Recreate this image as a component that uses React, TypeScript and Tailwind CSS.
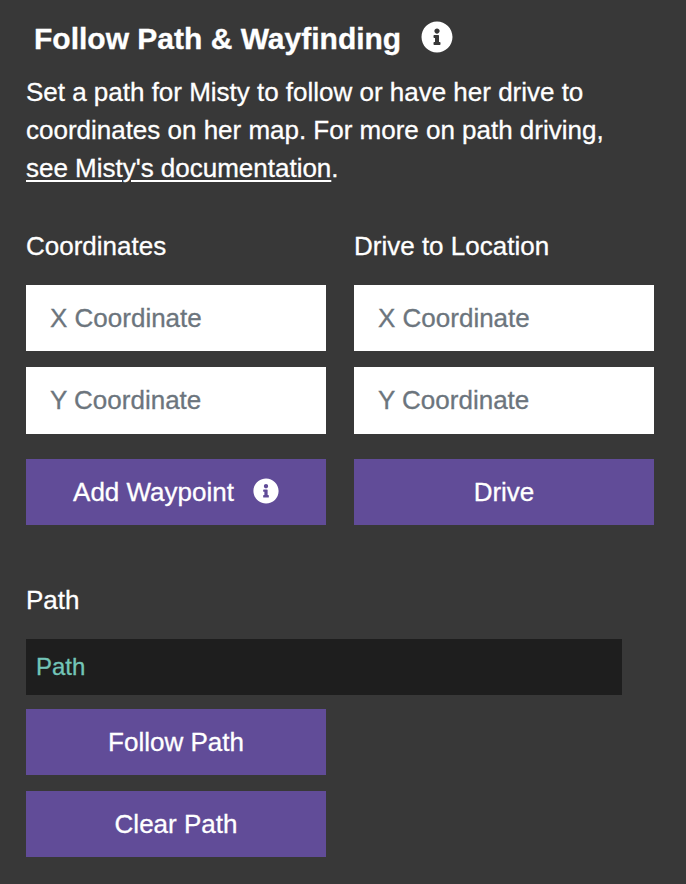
import React from 'react';
import { FaInfoCircle } from 'react-icons/fa';

const button = "flex h-[66px] w-[300px] items-center justify-center bg-[#614c98] text-[26px] text-white";
const input = "block w-[300px] bg-white px-6 text-[26px] text-black outline-none placeholder:text-[#6c757d] placeholder:opacity-100";

function Coordinates({ title, children }: { title: string; children: React.ReactNode }) {
  return (
    <section className="w-[300px]">
      <h2 className="mb-5 h-[38px] leading-[38px] whitespace-nowrap">{title}</h2>
      <input className={`${input} mb-4 h-[66px]`} placeholder="X Coordinate" />
      <input className={`${input} mb-[25px] h-[67px]`} placeholder="Y Coordinate" />
      {children}
    </section>
  );
}

export default function App() {
  return (
    <main className="h-[884px] w-[686px] overflow-hidden bg-[#383838] pl-[26px] pt-[19px] font-['Liberation_Sans',Arial,sans-serif] text-[26px] text-white [-webkit-text-stroke:0.3px]">
      <h1 className="flex h-[38px] items-center pl-2 text-[30px] font-bold whitespace-nowrap">
        <span className="w-[387px]">Follow Path &amp; Wayfinding</span>
        <FaInfoCircle className="mb-0.5 size-[32px]" />
      </h1>
      <div className="mt-4 leading-[38px] tracking-[-0.01px] whitespace-nowrap">
        <p>Set a path for Misty to follow or have her drive to</p>
        <p>coordinates on her map. For more on path driving,</p>
        <p><a href="#" className="underline decoration-2 underline-offset-[3px]">see Misty's documentation</a>.</p>
      </div>
      <div className="mt-10 flex gap-7">
        <Coordinates title="Coordinates">
          <button className={button}><span>Add Waypoint</span><FaInfoCircle className="mb-0.5 ml-[19px] size-[26px]" /></button>
        </Coordinates>
        <Coordinates title="Drive to Location">
          <button className={button}>Drive</button>
        </Coordinates>
      </div>
      <section className="mt-14">
        <h2 className="mb-5 h-[38px] leading-[38px]">Path</h2>
        <div className="mb-[14px] flex h-14 w-[596px] items-center bg-[#1e1e1e] px-[10px] text-[24px] text-[#73c5b8]">Path</div>
        <button className={`${button} mb-4`}>Follow Path</button>
        <button className={button}>Clear Path</button>
      </section>
    </main>
  );
}
